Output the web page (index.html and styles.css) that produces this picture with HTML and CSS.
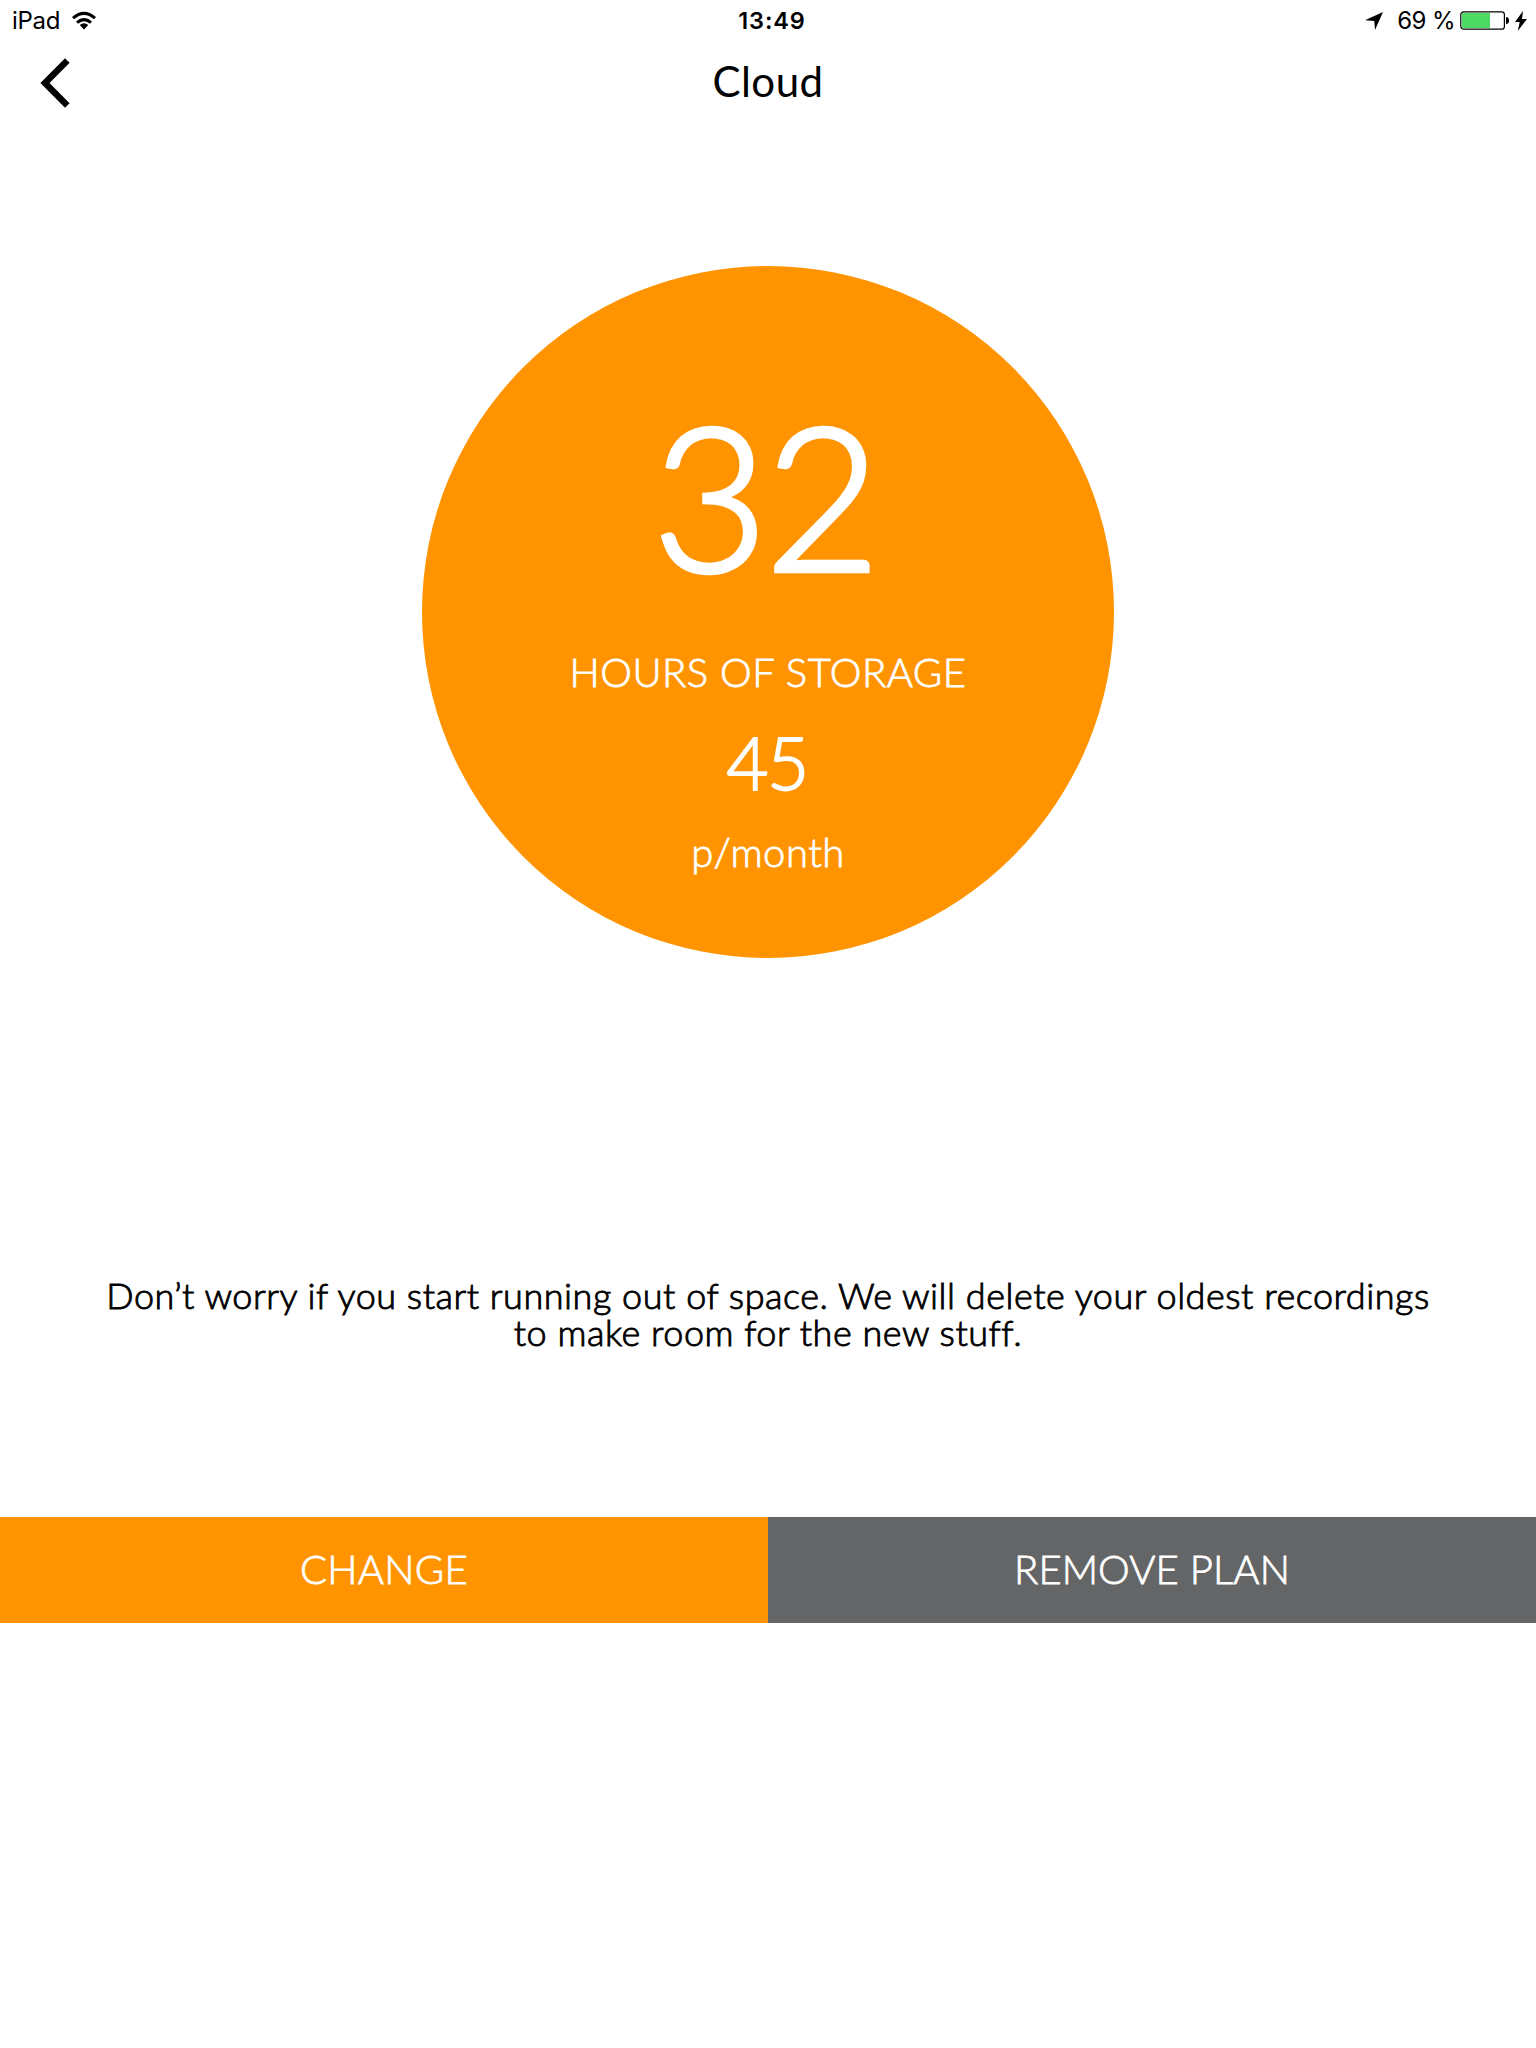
FILE: index.html
```html
<!DOCTYPE html>
<html lang="en">
<head>
<meta charset="utf-8">
<title>Cloud</title>
<link rel="stylesheet" href="styles.css">
</head>
<body>
<header class="status-bar">
  <div class="status-left">
    <span class="device">iPad</span>
    <svg class="wifi" width="26" height="20" viewBox="0 0 26 20"><g fill="none" stroke="#000" stroke-width="3"><path d="M2 7.2Q13-2.4 24 7.2"/><path d="M6 11.7Q13 5.6 20 11.7"/></g><path d="M8.7 14Q13 10.3 17.3 14L13 18.5Z"/></svg>
  </div>
  <span class="clock">13:49</span>
  <div class="status-right">
    <svg class="location" width="19" height="18" viewBox="0 0 19 18"><path d="M18 0L0 8.3L9.3 8.9L10 18Z"/></svg>
    <span class="percent">69 %</span>
    <svg class="battery" width="50" height="20" viewBox="0 0 50 20"><rect x=".8" y=".8" width="43.6" height="17.4" rx="2.8" fill="#fff" stroke="#000" stroke-width="1.2"/><path fill="#4cd964" d="M2 2h28v15H2z"/><path d="M46 6q3 0 3 3.500q0 3.500-3 3.500z"/></svg>
    <svg class="bolt" width="12" height="20" viewBox="0 0 12 20"><path d="M8 0L0 11h4.700L2.800 20L12 8H7z"/></svg>
  </div>
</header>
<nav class="nav-bar">
  <svg class="back" width="32" height="50" viewBox="0 0 32 50"><path d="M27.300 2.500L5 25L27.300 47.500" fill="none" stroke="#000" stroke-width="6.500"/></svg>
  <h1 class="title">Cloud</h1>
</nav>
<main>
  <section class="plan">
    <span class="hours">32</span>
    <span class="hours-label">HOURS OF STORAGE</span>
    <span class="price">45</span>
    <span class="period">p/month</span>
  </section>
  <p class="note">Don’t worry if you start running out of space. We will delete your oldest recordings<br>to make room for the new stuff.</p>
  <div class="actions">
    <button class="change">CHANGE</button>
    <button class="remove">REMOVE PLAN</button>
  </div>
</main>
</body>
</html>
```
FILE: styles.css
```css
* { box-sizing: border-box; }
body { margin: 0; background: #fff; color: #000; font-family: Lato, sans-serif; }
svg { display: block; flex: none; }
.status-bar { height: 42px; display: grid; grid-template-columns: 1fr auto 1fr; font: 400 24px/42px Inter, sans-serif; padding: 0 9px 0 12px; }
.status-left, .status-right { display: flex; align-items: center; }
.status-right { justify-content: flex-end; }
.device { letter-spacing: -.3px; }
.wifi { margin-left: 11px; }
.clock { font-weight: 600; font-size: 23.5px; letter-spacing: .9px; padding-left: 5px; }
.location { margin-top: -1px; }
.percent { margin: 0 5px 0 13px; letter-spacing: -.6px; }
.bolt { margin-left: 5px; }
.nav-bar { height: 86px; display: grid; grid-template-columns: 1fr auto 1fr; padding: 0 38px; }
.back { margin: 16px 0 0 2px; }
.title { margin: 0; font-size: 42px; line-height: 78px; font-weight: 400; letter-spacing: .5px; }
.plan { width: 692px; height: 692px; margin: 138px auto 0; border-radius: 50%; background: #ff9400; color: #fff; display: flex; flex-direction: column; align-items: center; font-weight: 300; white-space: nowrap; padding-top: 126px; }
.hours { font-size: 199px; line-height: 204px; letter-spacing: -3px; padding-right: 6px; -webkit-text-stroke: 4.5px #fff; }
.hours-label { font-size: 40px; line-height: 60px; margin-top: 46px; letter-spacing: .5px; -webkit-text-stroke: .8px #fff; }
.price { font-size: 73px; line-height: 80px; margin-top: 20px; letter-spacing: -1.5px; padding-right: 2px; -webkit-text-stroke: 1.8px #fff; }
.period { font-size: 40px; line-height: 60px; margin-top: 20px; letter-spacing: .5px; -webkit-text-stroke: .8px #fff; }
.note { margin: 319px 0 0; text-align: center; font-size: 36px; line-height: 37px; font-weight: 300; white-space: nowrap; letter-spacing: .52px; -webkit-text-stroke: .9px #000; }
.actions { display: grid; grid-template-columns: 1fr 1fr; margin-top: 166px; }
.actions button { height: 106px; border: 0; color: #fff; font: 300 40px/104px Lato, sans-serif; letter-spacing: .3px; padding: 0 0 2px; -webkit-text-stroke: .8px #fff; }
.change { background: #ff9400; }
.actions .remove { background: #646567; letter-spacing: .1px; }
```
